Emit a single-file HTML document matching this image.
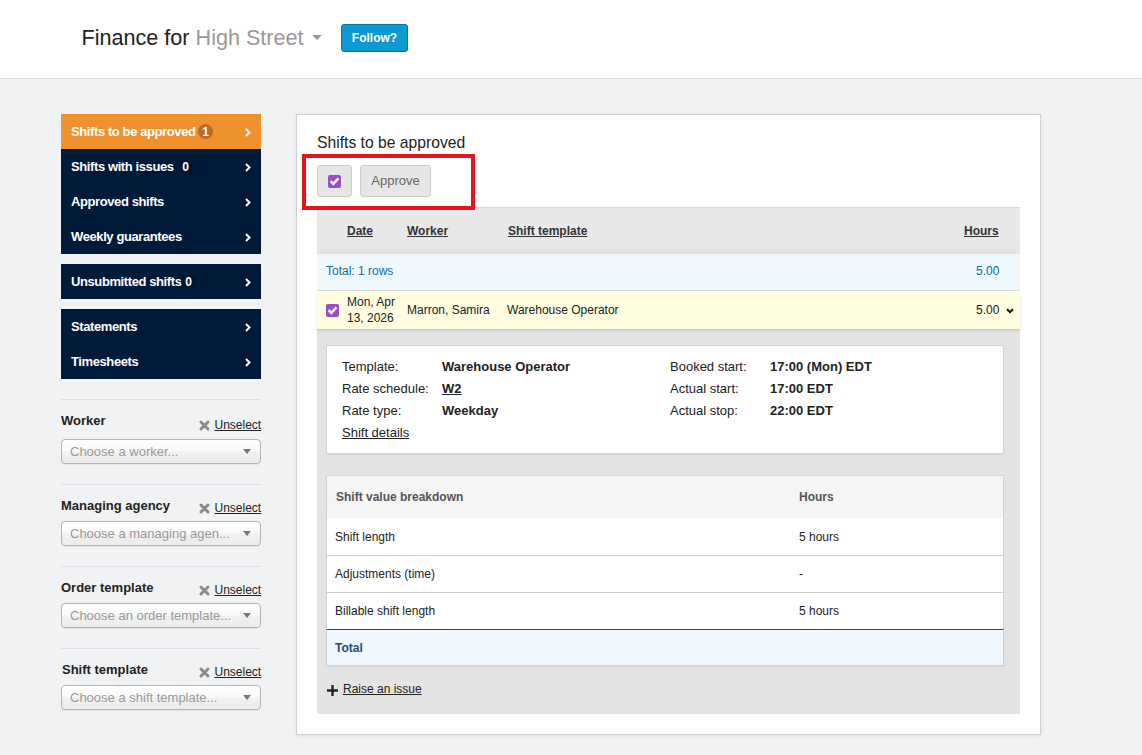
<!DOCTYPE html>
<html><head><meta charset="utf-8">
<style>
*{box-sizing:border-box;margin:0;padding:0}
html,body{width:1142px;height:755px;overflow:hidden}
body{font-family:"Liberation Sans",sans-serif;background:#f1f2f4;color:#222;position:relative;font-size:13px}
.abs{position:absolute;white-space:nowrap}
#hdr{left:0;top:0;width:1142px;height:79px;background:#fff;border-bottom:1px solid #dcdde0}
#title{left:81.5px;top:24px;font-size:21.6px;color:#222;line-height:28px}
#title .g{color:#999}
#caret{left:312px;top:35px;width:0;height:0;border-left:5px solid transparent;border-right:5px solid transparent;border-top:5px solid #999}
#follow{left:341px;top:24px;width:67px;height:28px;background:#0d9ad2;border:1px solid #08739f;border-radius:3px;color:#fff;font-weight:bold;font-size:12px;text-align:center;line-height:26px}
.nav{left:61px;width:200px;background:#001a3a}
.nav .it{height:35px;color:#fff;font-weight:bold;font-size:13px;letter-spacing:-0.4px;line-height:35px;padding-left:10px;position:relative}
.nav .it.on{background:#f0912e}
.nav .it .ch{position:absolute;right:10px;top:14px;width:6px;height:9px}
.badge{position:absolute;top:10px;width:15px;height:15px;border-radius:8px;background:#b86c1f;color:#fff;font-size:12px;letter-spacing:0;line-height:17px;text-align:center}
.badge.d{background:#00132c}
.hr{left:61px;width:200px;height:1px;background:#dfe0e3}
.flab{left:61px;font-weight:bold;font-size:13px;color:#222;line-height:16px}
.unsel{left:197.5px;font-size:12px;color:#222;line-height:14px}
.unsel u{position:absolute;left:17px;top:0}
.unsel svg{position:absolute;left:1px;top:2px}
.sel{left:61px;width:200px;height:25px;border:1px solid #b4b4b4;border-radius:4px;background:linear-gradient(#fff 0%,#fafafa 45%,#f0f0f0 55%,#ececec 100%);color:#999;font-size:13px;line-height:23px;padding-left:8px;box-shadow:0 1px 1px rgba(0,0,0,.06)}
.sel .ar{position:absolute;right:9px;top:9px;width:0;height:0;border-left:4px solid transparent;border-right:4px solid transparent;border-top:5px solid #777}
#panel{left:296px;top:114px;width:745px;height:621px;background:#fff;border:1px solid #d0d0d0;box-shadow:0 1px 5px rgba(0,0,0,.07)}
#ptitle{left:317px;top:134px;font-size:15.7px;color:#222;line-height:18px}
.btn{top:165px;height:32px;background:#e6e6e6;border:1px solid #cdcdcd;border-radius:3px}
.cb{width:13px;height:13px;background:#9d4cc8;border-radius:2px}
.cb svg{display:block}
#redbox{left:302px;top:154px;width:173px;height:56px;border:4px solid #e2161b;z-index:5}
#grey{left:317px;top:207px;width:703px;height:507px;background:#e4e4e4;border-top:1px solid #d6d6d6}
#ghead{left:317px;top:208px;width:703px;height:46px;background:linear-gradient(#e9e9e9 0%,#e8e8e8 80%,#e2e2e2 100%)}
.th{font-weight:bold;font-size:12px;color:#333;text-decoration:underline;line-height:14px}
#totrow{left:317px;top:254px;width:703px;height:37px;background:#eef8fd;border-bottom:1px solid #d9dcde}
#wline{left:317px;top:291px;width:703px;height:1px;background:#fff}
.teal{color:#0f6c9e;font-size:12px;line-height:14px}
#yrow{left:317px;top:292px;width:703px;height:37px;background:#fefde0;box-shadow:0 2px 3px rgba(0,0,0,.12)}
.t12{font-size:12px;line-height:14px;color:#222}
.t13{font-size:13px;line-height:15px;color:#222}
.b{font-weight:bold}
#card{left:326px;top:345px;width:678px;height:109px;background:#fff;border:1px solid #d4d4d4;box-shadow:0 1px 1px rgba(0,0,0,.05)}
#bd{left:326px;top:475px;width:678px;height:191px;background:#fff;border:1px solid #d4d4d4;box-shadow:0 1px 1px rgba(0,0,0,.05)}
.bdh{left:327px;top:476px;width:676px;height:42px;background:#f5f5f5}
.bdl{left:326px;width:678px;height:1px;background:#cfcfcf}
#bdtot{left:326px;top:629px;width:678px;height:37px;border-left:1px solid #d4d4d4;border-right:1px solid #d4d4d4;border-bottom:1px solid #d4d4d4;background:#eef8fd;border-top:1px solid #1d4a6e}
</style></head>
<body>
<div id="hdr" class="abs"></div>
<div id="title" class="abs">Finance for <span class="g">High Street</span></div>
<div id="caret" class="abs"></div>
<div id="follow" class="abs">Follow?</div>

<div class="nav abs" style="top:114px">
  <div class="it on">Shifts to be approved <span class="badge" style="left:137px">1</span><svg class="ch" viewBox="0 0 6 9"><path d="M1 1l3.5 3.5L1 8" stroke="#fff" stroke-width="2" fill="none"/></svg></div>
  <div class="it">Shifts with issues <span class="badge d" style="left:117px">0</span><svg class="ch" viewBox="0 0 6 9"><path d="M1 1l3.5 3.5L1 8" stroke="#fff" stroke-width="2" fill="none"/></svg></div>
  <div class="it">Approved shifts<svg class="ch" viewBox="0 0 6 9"><path d="M1 1l3.5 3.5L1 8" stroke="#fff" stroke-width="2" fill="none"/></svg></div>
  <div class="it">Weekly guarantees<svg class="ch" viewBox="0 0 6 9"><path d="M1 1l3.5 3.5L1 8" stroke="#fff" stroke-width="2" fill="none"/></svg></div>
</div>
<div class="nav abs" style="top:264px">
  <div class="it">Unsubmitted shifts <span class="badge d" style="left:120px">0</span><svg class="ch" viewBox="0 0 6 9"><path d="M1 1l3.5 3.5L1 8" stroke="#fff" stroke-width="2" fill="none"/></svg></div>
</div>
<div class="nav abs" style="top:309px">
  <div class="it">Statements<svg class="ch" viewBox="0 0 6 9"><path d="M1 1l3.5 3.5L1 8" stroke="#fff" stroke-width="2" fill="none"/></svg></div>
  <div class="it">Timesheets<svg class="ch" viewBox="0 0 6 9"><path d="M1 1l3.5 3.5L1 8" stroke="#fff" stroke-width="2" fill="none"/></svg></div>
</div>

<!-- filters -->
<div class="hr abs" style="top:399px"></div>
<div class="flab abs" style="top:413px">Worker</div>
<div class="unsel abs" style="top:418px"><svg width="11" height="11" viewBox="0 0 11 11"><path d="M2 2l7 7M9 2l-7 7" stroke="#8a8a8a" stroke-width="2.9" stroke-linecap="round"/></svg><u>Unselect</u></div>
<div class="sel abs" style="top:439px">Choose a worker...<span class="ar"></span></div>

<div class="hr abs" style="top:484px"></div>
<div class="flab abs" style="top:498px">Managing agency</div>
<div class="unsel abs" style="top:501px"><svg width="11" height="11" viewBox="0 0 11 11"><path d="M2 2l7 7M9 2l-7 7" stroke="#8a8a8a" stroke-width="2.9" stroke-linecap="round"/></svg><u>Unselect</u></div>
<div class="sel abs" style="top:521px">Choose a managing agen...<span class="ar"></span></div>

<div class="hr abs" style="top:566px"></div>
<div class="flab abs" style="top:580px">Order template</div>
<div class="unsel abs" style="top:583px"><svg width="11" height="11" viewBox="0 0 11 11"><path d="M2 2l7 7M9 2l-7 7" stroke="#8a8a8a" stroke-width="2.9" stroke-linecap="round"/></svg><u>Unselect</u></div>
<div class="sel abs" style="top:603px">Choose an order template...<span class="ar"></span></div>

<div class="hr abs" style="top:648px"></div>
<div class="flab abs" style="top:662px;left:62px">Shift template</div>
<div class="unsel abs" style="top:665px"><svg width="11" height="11" viewBox="0 0 11 11"><path d="M2 2l7 7M9 2l-7 7" stroke="#8a8a8a" stroke-width="2.9" stroke-linecap="round"/></svg><u>Unselect</u></div>
<div class="sel abs" style="top:685px">Choose a shift template...<span class="ar"></span></div>

<!-- main panel -->
<div id="panel" class="abs"></div>
<div id="ptitle" class="abs">Shifts to be approved</div>
<div class="btn abs" style="left:317px;width:35px"><div class="cb abs" style="left:10px;top:9px"><svg width="13" height="13" viewBox="0 0 13 13"><path d="M2.6 6.2l2.7 2.7L10.4 3.4" stroke="#fff" stroke-width="2.4" fill="none"/></svg></div></div>
<div class="btn abs" style="left:360px;width:71px;color:#666;font-size:13px;line-height:30px;text-align:center">Approve</div>
<div id="redbox" class="abs"></div>

<div id="grey" class="abs"></div>
<div id="ghead" class="abs"></div><div class="th abs" style="left:347px;top:224px">Date</div>
<div class="th abs" style="left:407px;top:224px">Worker</div>
<div class="th abs" style="left:508px;top:224px">Shift template</div>
<div class="th abs" style="left:964px;top:224px">Hours</div>

<div id="totrow" class="abs"></div>
<div class="teal abs" style="left:326px;top:264px">Total: 1 rows</div>
<div class="teal abs" style="left:976px;top:264px">5.00</div>

<div id="wline" class="abs"></div><div id="yrow" class="abs"></div>
<div class="cb abs" style="left:326px;top:304px"><svg width="13" height="13" viewBox="0 0 13 13"><path d="M2.6 6.2l2.7 2.7L10.4 3.4" stroke="#fff" stroke-width="2.4" fill="none"/></svg></div>
<div class="t12 abs" style="left:347px;top:295px;line-height:15.5px">Mon, Apr<br>13, 2026</div>
<div class="t12 abs" style="left:407px;top:303px">Marron, Samira</div>
<div class="t12 abs" style="left:507px;top:303px">Warehouse Operator</div>
<div class="t12 abs" style="left:976px;top:303px">5.00</div>
<svg class="abs" style="left:1006px;top:308px" width="8" height="6" viewBox="0 0 8 6"><path d="M1 1.2l3 3l3-3" stroke="#111" stroke-width="2" fill="none"/></svg>

<div id="card" class="abs"></div>
<div class="t13 abs" style="left:342px;top:356px;line-height:22px">Template:<br>Rate schedule:<br>Rate type:<br><u>Shift details</u></div>
<div class="t13 b abs" style="left:442px;top:356px;line-height:22px">Warehouse Operator<br><u>W2</u><br>Weekday</div>
<div class="t13 abs" style="left:670px;top:356px;line-height:22px">Booked start:<br>Actual start:<br>Actual stop:</div>
<div class="t13 b abs" style="left:770px;top:356px;line-height:22px">17:00 (Mon) EDT<br>17:00 EDT<br>22:00 EDT</div>

<div id="bd" class="abs"></div>
<div class="bdh abs"></div>
<div class="t12 b abs" style="left:336px;top:490px;color:#555">Shift value breakdown</div>
<div class="t12 b abs" style="left:799px;top:490px;color:#555">Hours</div>
<div class="t12 abs" style="left:335px;top:530px">Shift length</div>
<div class="t12 abs" style="left:799px;top:530px">5 hours</div>
<div class="bdl abs" style="top:555px"></div>
<div class="t12 abs" style="left:335px;top:567px">Adjustments (time)</div>
<div class="t12 abs" style="left:799px;top:567px">-</div>
<div class="bdl abs" style="top:592px"></div>
<div class="t12 abs" style="left:335px;top:604px">Billable shift length</div>
<div class="t12 abs" style="left:799px;top:604px">5 hours</div>
<div id="bdtot" class="abs"></div>
<div class="t12 b abs" style="left:335px;top:641px;color:#1b4f7a">Total</div>

<svg class="abs" style="left:327px;top:685px" width="11" height="11" viewBox="0 0 11 11"><path d="M5.5 0v11M0 5.5h11" stroke="#222" stroke-width="2.4"/></svg>
<div class="t12 abs" style="left:343px;top:682px"><u>Raise an issue</u></div>
</body></html>
